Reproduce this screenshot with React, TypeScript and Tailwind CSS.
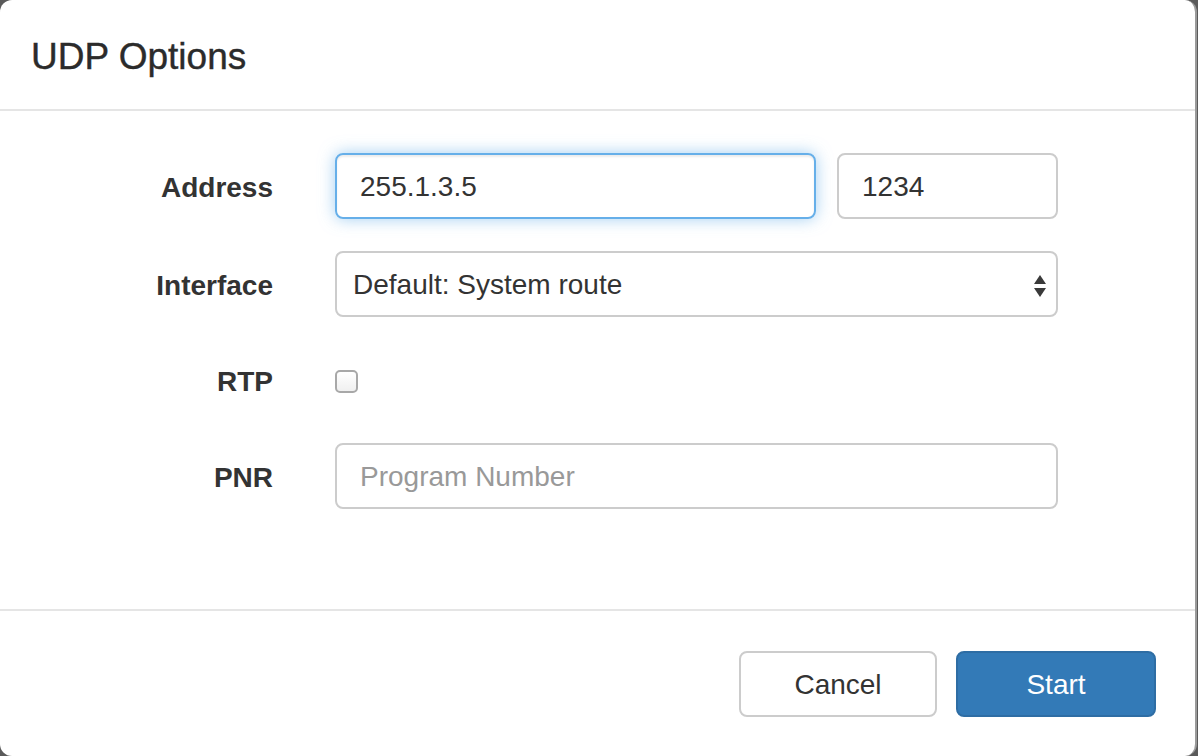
import React from "react";

const font = { fontFamily: '"Liberation Sans", Arial, sans-serif' };

const Label: React.FC<{ children: React.ReactNode }> = ({ children }) => (
  <div className="w-[273px] shrink-0 pt-[3px] text-right text-[28px] font-bold text-[#333]">
    {children}
  </div>
);

const App: React.FC = () => {
  return (
    <div className="w-[1198px] h-[756px] overflow-hidden bg-[#5a5a5a]" style={font}>
      <div className="w-[1197px] h-[756px] bg-white rounded-[12px] border-r-2 border-[#9a9a9a] flex flex-col">
        {/* Header */}
        <div className="h-[111px] shrink-0 flex items-center pl-[31px] border-b-2 border-[#e5e5e5]">
          <h4 className="text-[37px] font-medium text-[#2b2b2b] leading-none pt-[4px] [-webkit-text-stroke:0.4px_#2b2b2b]">
            UDP Options
          </h4>
        </div>

        {/* Body */}
        <div className="h-[498px] shrink-0 pt-[42px] flex flex-col gap-[32px]">
          <div className="flex items-center h-[66px]">
            <Label>Address</Label>
            <div className="flex gap-[21px] ml-[62px]">
              <input
                defaultValue="255.1.3.5"
                className="w-[481px] h-[66px] rounded-[8px] border-2 border-[#66afe9] px-[23px] pt-[2px] text-[28px] text-[#333] outline-none shadow-[inset_0_2px_2px_rgba(0,0,0,0.075),0_0_16px_rgba(102,175,233,0.6)]"
                style={font}
              />
              <input
                defaultValue="1234"
                className="w-[221px] h-[66px] rounded-[8px] border-2 border-[#ccc] px-[23px] pt-[2px] text-[28px] text-[#333] outline-none"
                style={font}
              />
            </div>
          </div>

          <div className="flex items-center h-[66px]">
            <Label>Interface</Label>
            <div className="ml-[62px] relative w-[723px] h-[66px] rounded-[8px] border-2 border-[#ccc] flex items-center pl-[16px] pt-[2px] text-[28px] text-[#333]">
              Default: System route
              <svg
                className="absolute right-[9px] top-[21px]"
                width="14"
                height="24"
                viewBox="0 0 14 24"
              >
                <path d="M7 1 L13 10 L1 10 Z" fill="#3a3a3a" />
                <path d="M1 14 L13 14 L7 23 Z" fill="#3a3a3a" />
              </svg>
            </div>
          </div>

          <div className="flex items-center h-[62px]">
            <Label>RTP</Label>
            <div className="ml-[62px] mt-[3px] w-[23px] h-[23px] rounded-[5px] border-2 border-[#a8a8a8] bg-gradient-to-b from-white to-[#f0f0f0]" />
          </div>

          <div className="flex items-center h-[66px]">
            <Label>PNR</Label>
            <input
              placeholder="Program Number"
              className="ml-[62px] w-[723px] h-[66px] rounded-[8px] border-2 border-[#ccc] px-[23px] pt-[2px] text-[28px] text-[#333] placeholder:text-[#999] outline-none"
              style={font}
            />
          </div>
        </div>

        {/* Footer */}
        <div className="border-t-2 border-[#e5e5e5] flex justify-end gap-[19px] pt-[40px] pr-[39px]">
          <button
            className="w-[198px] h-[66px] rounded-[8px] border-2 border-[#ccc] bg-white pt-[2px] text-[28px] text-[#333]"
            style={font}
          >
            Cancel
          </button>
          <button
            className="w-[200px] h-[66px] rounded-[8px] border-2 border-[#2e6da4] bg-[#337ab7] pt-[2px] text-[28px] text-white"
            style={font}
          >
            Start
          </button>
        </div>
      </div>
    </div>
  );
};

export default App;
